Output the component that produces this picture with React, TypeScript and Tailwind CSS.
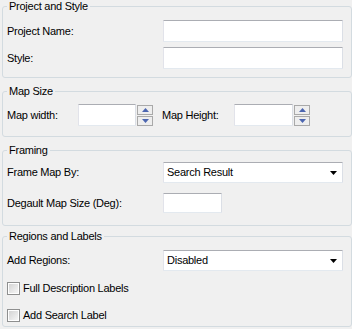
import React from "react";

const inputCls =
  "bg-white border border-t-[#abadb3] border-l-[#e2e3ea] border-r-[#dbdfe6] border-b-[#e3e9ef] rounded-[1px]";

function Group({
  title,
  className,
  children,
}: {
  title: string;
  className: string;
  children: React.ReactNode;
}) {
  return (
    <fieldset
      className={
        "w-[350px] min-w-0 m-0 border border-[#d3dbe0] rounded-[3px] pl-[4px] pr-[7px] " +
        className
      }
    >
      <legend className="px-[2px] leading-[13px] text-[11px] text-black">{title}</legend>
      {children}
    </fieldset>
  );
}

function Spinner() {
  return (
    <div className="flex flex-col h-[22px] pt-[1px] gap-[1px] ml-[1px]">
      {[0, 1].map((i) => (
        <div
          key={i}
          className="w-[16px] h-[10px] border border-[#a9a9a9] bg-[#eeeeee] flex items-center justify-center"
        >
          <svg width="7" height="4" viewBox="0 0 7 4">
            {i === 0 ? (
              <path d="M3.5 0 L7 4 L0 4 Z" fill="#4c66b0" />
            ) : (
              <path d="M0 0 L7 0 L3.5 4 Z" fill="#4c66b0" />
            )}
          </svg>
        </div>
      ))}
    </div>
  );
}

function Select({ value }: { value: string }) {
  return (
    <div className={inputCls + " w-[180px] h-[21px] flex items-center justify-between pl-[3px] pr-[5px]"}>
      <span className="text-[11px] text-black">{value}</span>
      <svg width="7" height="4" viewBox="0 0 7 4">
        <path d="M0 0 L7 0 L3.5 4 Z" fill="#000" />
      </svg>
    </div>
  );
}

function Checkbox({ label }: { label: string }) {
  return (
    <div className="flex items-center gap-[3px] h-[13px]">
      <div className="w-[13px] h-[13px] border border-[#8e8f8f] bg-white p-[1px]">
        <div className="w-full h-full bg-gradient-to-br from-[#d4d4d4] to-[#f6f6f6]" />
      </div>
      <span className="text-[11px] leading-[13px] text-black">{label}</span>
    </div>
  );
}

export default function App() {
  return (
    <div
      className="w-[352px] h-[329px] bg-[#f0f0f0] overflow-hidden text-[11px] text-black tracking-[-0.25px]"
      style={{ fontFamily: '"Liberation Sans", Arial, sans-serif' }}
    >
      <div className="pl-[2px] flex flex-col">
        <Group title="Project and Style" className="pt-[7px] pb-[8px]">
          <div className="flex items-center h-[22px]">
            <span className="w-[156px]">Project Name:</span>
            <div className={inputCls + " w-[180px] h-[22px]"} />
          </div>
          <div className="flex items-center h-[22px] mt-[5px]">
            <span className="w-[156px]">Style:</span>
            <div className={inputCls + " w-[180px] h-[22px]"} />
          </div>
        </Group>

        <Group title="Map Size" className="mt-[7px] pt-[6px] pb-[10px]">
          <div className="flex items-center h-[22px]">
            <span className="w-[71px]">Map width:</span>
            <div className={inputCls + " w-[58px] h-[22px]"} />
            <Spinner />
            <span className="w-[72px] ml-[9px]">Map Height:</span>
            <div className={inputCls + " w-[59px] h-[22px]"} />
            <Spinner />
          </div>
        </Group>

        <Group title="Framing" className="mt-[7px] pt-[5px] pb-[12px]">
          <div className="flex items-center h-[21px]">
            <span className="w-[156px]">Frame Map By:</span>
            <Select value="Search Result" />
          </div>
          <div className="flex items-center h-[20px] mt-[10px]">
            <span className="w-[156px]">Degault Map Size (Deg):</span>
            <div className={inputCls + " w-[59px] h-[20px]"} />
          </div>
        </Group>

        <Group title="Regions and Labels" className="mt-[4px] pt-[7px] pb-[4px]">
          <div className="flex items-center h-[21px]">
            <span className="w-[156px]">Add Regions:</span>
            <Select value="Disabled" />
          </div>
          <div className="mt-[11px]">
            <Checkbox label="Full Description Labels" />
          </div>
          <div className="mt-[14px]">
            <Checkbox label="Add Search Label" />
          </div>
        </Group>
      </div>
    </div>
  );
}
